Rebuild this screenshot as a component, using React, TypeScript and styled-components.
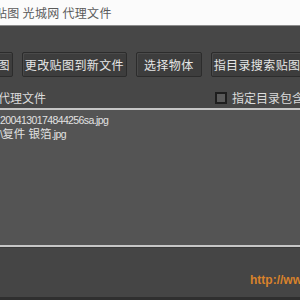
import styled, { createGlobalStyle } from 'styled-components';

const GlobalStyle = createGlobalStyle`
  html, body {
    margin: 0;
    padding: 0;
    background: #474747;
  }
  body {
    font-family: "Liberation Sans", Arial, "Noto Sans CJK SC", sans-serif;
  }
`;

const Window = styled.div`
  width: 300px;
  height: 300px;
  overflow: hidden;
  display: flex;
  flex-direction: column;
  background: #474747;
`;

const TitleBar = styled.div`
  height: 26px;
  box-sizing: border-box;
  flex-shrink: 0;
  background: #fbfbfb;
  border-bottom: 1px solid #8c8c8c;
  display: flex;
  align-items: center;
`;

const TitleText = styled.span`
  margin-left: -5px;
  font-size: 12px;
  letter-spacing: 0.3px;
  color: #5a5a5a;
  white-space: pre;
  font-family: "Noto Sans CJK SC", sans-serif;
`;

const Toolbar = styled.div`
  margin-top: 26px;
  margin-left: -18px;
  height: 25px;
  flex-shrink: 0;
  display: flex;
  gap: 9px;
`;

const ToolButton = styled.button<{ $pad?: number }>`
  height: 25px;
  box-sizing: border-box;
  padding: 0 ${(p) => p.$pad ?? 4}px;
  background: #3d3d3d;
  border: 1px solid #2c2c2c;
  border-radius: 2px;
  box-shadow: inset 1px 1px 0 #4a4a4a;
  color: #e6e6e6;
  font-family: "Noto Sans CJK SC", sans-serif;
  font-size: 12px;
  letter-spacing: 0.4px;
  white-space: nowrap;
  flex-shrink: 0;
`;

const OptionsRow = styled.div`
  height: 31px;
  flex-shrink: 0;
  display: flex;
  align-items: flex-end;
  justify-content: space-between;
  padding-bottom: 3px;
  box-sizing: border-box;
`;

const Label = styled.span`
  margin-left: -2px;
  font-family: "Noto Sans CJK SC", sans-serif;
  font-size: 12px;
  color: #dcdcdc;
  line-height: 14px;
`;

const CheckOption = styled.label`
  display: flex;
  align-items: center;
  gap: 5px;
  margin-right: -16px;
  font-family: "Noto Sans CJK SC", sans-serif;
  font-size: 12px;
  color: #dcdcdc;
  line-height: 14px;
  white-space: nowrap;
`;

const CheckBox = styled.span`
  width: 12px;
  height: 12px;
  box-sizing: border-box;
  border: 2px solid #1e1e1e;
  background: #5a5a5a;
`;

const FileList = styled.ul`
  margin: 0;
  padding: 3px 0 0 0;
  list-style: none;
  height: 139px;
  box-sizing: border-box;
  flex-shrink: 0;
  background: #545454;
  border-top: 2px solid #c6c6c6;
  border-bottom: 2px solid #c6c6c6;
`;

const FileItem = styled.li`
  font-family: "Liberation Sans", Arial, "Noto Sans CJK SC", sans-serif;
  font-size: 10.5px;
  letter-spacing: -0.6px;
  line-height: 14px;
  color: #e2e2e2;
  white-space: nowrap;
`;

const Cjk = styled.span`
  font-size: 11.5px;
  letter-spacing: 0;
`;

const Footer = styled.div`
  flex: 1;
  display: flex;
  flex-direction: column;
  background: #454545;
  border-top: 1px solid #3a3a3a;
`;

const FooterBody = styled.div`
  flex: 1;
  display: flex;
  align-items: center;
  justify-content: flex-end;
  padding-top: 14px;
`;

const Link = styled.span`
  width: 50px;
  overflow: hidden;
  white-space: nowrap;
  font-family: "Liberation Sans", Arial, sans-serif;
  font-size: 12px;
  font-weight: bold;
  color: #d9822b;
`;

const BottomEdge = styled.div`
  height: 3px;
  background: #2f2f2f;
`;

export default function App() {
  return (
    <>
      <GlobalStyle />
      <Window>
        <TitleBar>
          <TitleText>贴图 光城网 代理文件</TitleText>
        </TitleBar>
        <Toolbar>
          <ToolButton $pad={2}>贴图</ToolButton>
          <ToolButton $pad={2}>更改贴图到新文件</ToolButton>
          <ToolButton $pad={7}>选择物体</ToolButton>
          <ToolButton $pad={2}>指目录搜索贴图</ToolButton>
        </Toolbar>
        <OptionsRow>
          <Label>代理文件</Label>
          <CheckOption>
            <CheckBox />
            指定目录包含子
          </CheckOption>
        </OptionsRow>
        <FileList>
          <FileItem>2004130174844256sa.jpg</FileItem>
          <FileItem>
            \<Cjk>复件 银箔</Cjk>.jpg
          </FileItem>
        </FileList>
        <Footer>
          <FooterBody>
            <Link>http://www</Link>
          </FooterBody>
          <BottomEdge />
        </Footer>
      </Window>
    </>
  );
}
